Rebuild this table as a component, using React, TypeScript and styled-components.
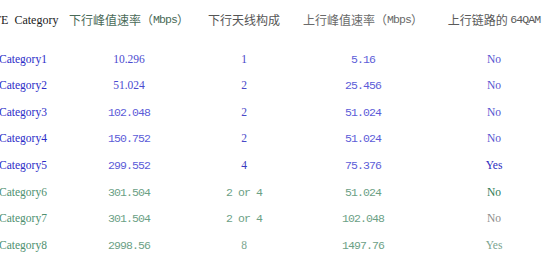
import React from "react";
import styled, { createGlobalStyle } from "styled-components";

const GlobalStyle = createGlobalStyle`
  html, body {
    margin: 0;
    padding: 0;
    background: #ffffff;
  }
  body {
    width: 550px;
    height: 279px;
    overflow: hidden;
  }
`;

type FontKind = "serif" | "mono" | "cjk";

const fonts: Record<FontKind, string> = {
  serif: `font-family: "Liberation Serif", "Times New Roman", serif; font-size: 11.5px;`,
  mono: `font-family: "Liberation Mono", "Courier New", monospace; font-size: 11.5px; letter-spacing: -0.9px;`,
  cjk: `font-family: "Noto Sans CJK SC", "Noto Sans", sans-serif; font-size: 12px;`,
};

const Table = styled.div`
  display: flex;
  flex-direction: column;
  padding-top: 7px;
  width: 550px;
`;

const Row = styled.div<{ $header?: boolean }>`
  display: grid;
  grid-template-columns: 46px 166px 64px 174px 88px;
  height: ${(p) => (p.$header ? "26px" : "26.6px")};
  margin-bottom: ${(p) => (p.$header ? "13px" : "0")};
`;

const Cell = styled.div<{ $font: FontKind; $color: string }>`
  display: flex;
  align-items: center;
  justify-content: center;
  white-space: nowrap;
  line-height: 1;
  color: ${(p) => p.$color};
  ${(p) => fonts[p.$font]}
`;

const Latin = styled.span`
  font-family: "Liberation Mono", "Courier New", monospace;
  font-size: 11.5px;
  letter-spacing: -0.9px;
`;

const SerifLatin = styled.span`
  font-family: "Liberation Serif", "Times New Roman", serif;
  font-size: 12px;
`;

type RowData = {
  cat: string;
  catColor: string;
  dl: string;
  dlMono: boolean;
  dlColor: string;
  ant: string;
  antColor: string;
  ul: string;
  ulColor: string;
  qam: string;
  qamColor: string;
};

const BLUE_CAT = "#2c2cc8";
const BLUE_NUM = "#4a4ad0";
const BLUE_LIGHT = "#5c5cd8";
const GREEN_CAT = "#4e9070";
const GREEN_NUM = "#6c9f86";

const rows: RowData[] = [
  { cat: "Category1", catColor: BLUE_CAT, dl: "10.296", dlMono: false, dlColor: BLUE_NUM, ant: "1", antColor: "#4848c8", ul: "5.16", ulColor: BLUE_LIGHT, qam: "No", qamColor: "#5454d0" },
  { cat: "Category2", catColor: BLUE_CAT, dl: "51.024", dlMono: false, dlColor: BLUE_NUM, ant: "2", antColor: "#4848c8", ul: "25.456", ulColor: BLUE_LIGHT, qam: "No", qamColor: "#5454d0" },
  { cat: "Category3", catColor: BLUE_CAT, dl: "102.048", dlMono: true, dlColor: BLUE_LIGHT, ant: "2", antColor: "#4848c8", ul: "51.024", ulColor: BLUE_LIGHT, qam: "No", qamColor: "#5454d0" },
  { cat: "Category4", catColor: BLUE_CAT, dl: "150.752", dlMono: true, dlColor: BLUE_LIGHT, ant: "2", antColor: "#4848c8", ul: "51.024", ulColor: BLUE_LIGHT, qam: "No", qamColor: "#5454d0" },
  { cat: "Category5", catColor: BLUE_CAT, dl: "299.552", dlMono: true, dlColor: BLUE_LIGHT, ant: "4", antColor: "#3a3ac0", ul: "75.376", ulColor: BLUE_LIGHT, qam: "Yes", qamColor: "#2a2abe" },
  { cat: "Category6", catColor: GREEN_CAT, dl: "301.504", dlMono: true, dlColor: GREEN_NUM, ant: "2 or 4", antColor: GREEN_NUM, ul: "51.024", ulColor: GREEN_NUM, qam: "No", qamColor: "#2f7a55" },
  { cat: "Category7", catColor: GREEN_CAT, dl: "301.504", dlMono: true, dlColor: GREEN_NUM, ant: "2 or 4", antColor: GREEN_NUM, ul: "102.048", ulColor: GREEN_NUM, qam: "No", qamColor: "#8c8c8c" },
  { cat: "Category8", catColor: GREEN_CAT, dl: "2998.56", dlMono: true, dlColor: GREEN_NUM, ant: "8", antColor: "#78a58e", ul: "1497.76", ulColor: GREEN_NUM, qam: "Yes", qamColor: "#7aa38e" },
];

export default function App() {
  return (
    <>
      <GlobalStyle />
      <Table>
        <Row $header>
          <Cell $font="serif" $color="#222222">
            <SerifLatin>LTE&nbsp;&nbsp;Category</SerifLatin>
          </Cell>
          <Cell $font="cjk" $color="#4a6a58">
            下行峰值速率（<Latin>Mbps</Latin>）
          </Cell>
          <Cell $font="cjk" $color="#555555">
            下行天线构成
          </Cell>
          <Cell $font="cjk" $color="#6a6a6a">
            上行峰值速率（<Latin>Mbps</Latin>）
          </Cell>
          <Cell $font="cjk" $color="#5a5a5a">
            上行链路的&nbsp;<Latin>64QAM</Latin>
          </Cell>
        </Row>
        {rows.map((r) => (
          <Row key={r.cat}>
            <Cell $font="serif" $color={r.catColor}>{r.cat}</Cell>
            <Cell $font={r.dlMono ? "mono" : "serif"} $color={r.dlColor}>{r.dl}</Cell>
            <Cell $font={r.ant.length > 1 ? "mono" : "serif"} $color={r.antColor}>{r.ant}</Cell>
            <Cell $font="mono" $color={r.ulColor}>{r.ul}</Cell>
            <Cell $font="serif" $color={r.qamColor}>{r.qam}</Cell>
          </Row>
        ))}
      </Table>
    </>
  );
}
